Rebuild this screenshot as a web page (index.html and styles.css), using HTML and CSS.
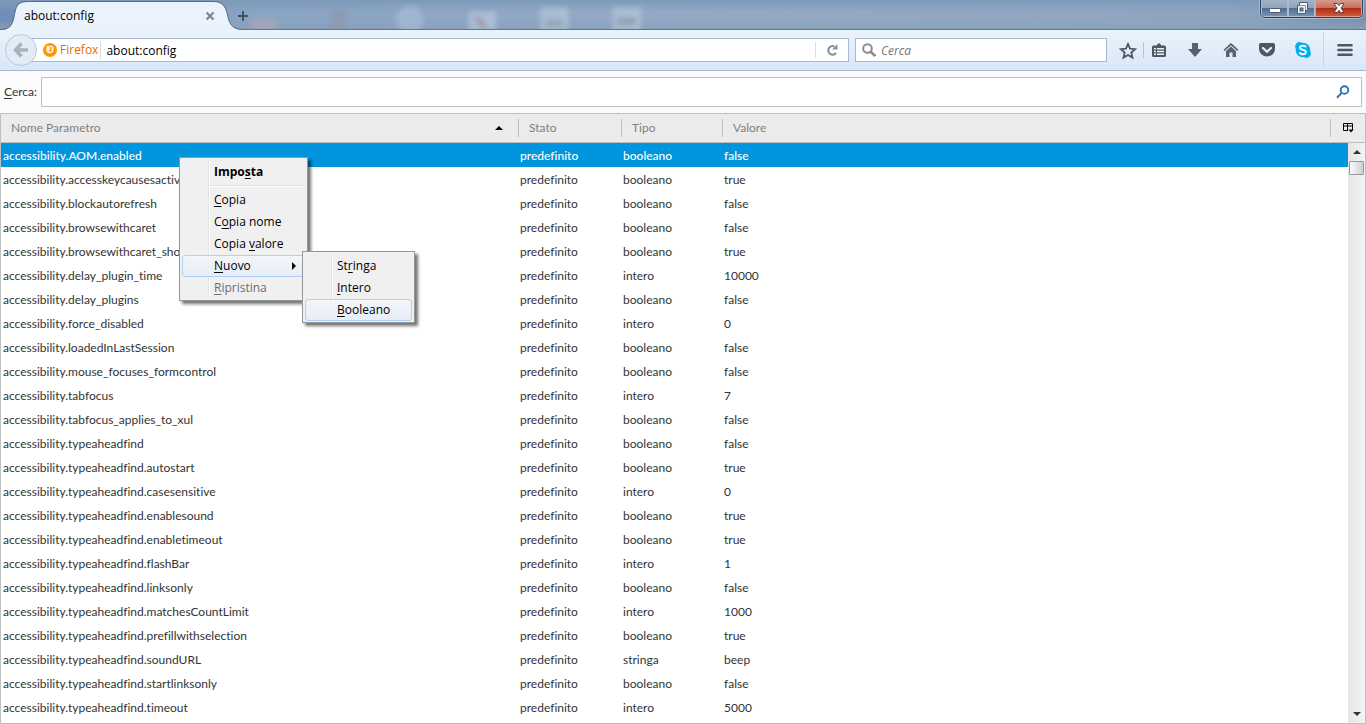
FILE: index.html
```html
<!DOCTYPE html>
<html lang="it">
<head>
<meta charset="utf-8">
<title>about:config</title>
<link rel="stylesheet" href="styles.css">
</head>
<body>
<header class="titlebar">
  <svg class="glass" width="700" height="30" viewBox="0 0 700 30" aria-hidden="true">
    <defs><filter id="soft" x="-50%" y="-50%" width="200%" height="200%"><feGaussianBlur stdDeviation="2.500"/></filter></defs>
    <g filter="url(#soft)" opacity=".75">
      <rect x="248" y="19" width="26" height="12" fill="#aaa8b6"/>
      <rect x="330" y="10" width="16" height="22" fill="#8b9aac"/>
      <circle cx="412" cy="20" r="14" fill="#a6bbd5"/>
      <rect x="473" y="12" width="28" height="20" fill="#b4c6da"/>
      <path d="M480 18l10 10" stroke="#b08fa2" stroke-width="6"/>
      <rect x="547" y="8" width="29" height="24" fill="#b2c6d9"/>
      <rect x="552" y="20" width="18" height="8" fill="#93a8b4"/>
      <rect x="622" y="8" width="29" height="24" fill="#b2c6d9"/>
      <rect x="626" y="18" width="20" height="8" fill="#8fa2b2"/>
    </g>
  </svg>
  <div class="tab">
    <svg class="tab-shape" width="245" height="31" viewBox="0 0 245 31" aria-hidden="true">
      <path d="M0 30C9 30 12 27 14 18C16 7 17 2 27 2H214C223 2 226 8 228 17C230 26 234 30 244 30V31H0Z" fill="#eaf2fc"/>
      <path d="M0 29.500C9 29 12 26 14 17C16 6 17 1.500 27 1.500H214C224 1.500 226 8 228 17C230 26 234 29.500 244 29.500" fill="none" stroke="#56708f"/>
    </svg>
    <span class="tab-title">about:config</span>
    <button class="tab-close" aria-label="Chiudi scheda"><svg width="10" height="10" viewBox="0 0 10 10"><path d="M1.500 1.500l7 7M8.500 1.500l-7 7" stroke="#7c8793" stroke-width="2.200"/></svg></button>
  </div>
  <button class="new-tab" aria-label="Nuova scheda"><svg width="12" height="12" viewBox="0 0 12 12"><path d="M6 1v10M1 6h10" stroke="#43505f" stroke-width="2"/></svg></button>
  <div class="window-buttons">
    <button class="win" aria-label="Riduci a icona"><svg width="14" height="16" viewBox="0 0 14 16"><rect x="1.500" y="8.500" width="11" height="4" rx="1" fill="#fff" stroke="#4b5a72"/></svg></button>
    <button class="win" aria-label="Ripristina finestra"><svg width="14" height="16" viewBox="0 0 14 16"><path d="M4.500 2.500h8v8h-2v3h-8v-8h2z" fill="#f5f7fa" stroke="#4b5a72"/><path d="M4.500 5.500h6v5" fill="none" stroke="#8090a6"/><rect x="5" y="8" width="3" height="3" fill="#6e82a0" stroke="#4b5a72"/></svg></button>
    <button class="win win-close" aria-label="Chiudi"><svg width="14" height="16" viewBox="0 0 14 16"><path d="M2 3.500h3.200L7 5.700l1.800-2.200H12L9 8l3 4.500H8.800L7 10.300l-1.800 2.200H2L5 8z" fill="#fff" stroke="#5d4049"/></svg></button>
  </div>
</header>

<nav class="toolbar">
  <button class="back" aria-label="Indietro"><svg width="16" height="16" viewBox="0 0 16 16"><path d="M8.500 1.500L2.500 8l6 6.500M3 8h12" fill="none" stroke="#a7b2bf" stroke-width="3.400"/></svg></button>
  <div class="urlbar">
    <svg width="14" height="14" viewBox="0 0 14 14" aria-hidden="true"><circle cx="7" cy="7" r="7" fill="#ff9500"/><path d="M4.500 2.200L6.500 3.200L9 2.400C11.300 4 11.200 7.500 9.600 9.200C7.800 11 4.800 10.600 3.600 8.400C3 7 3.200 5.500 3.600 4.600z" fill="#fff3dc"/><path d="M6.800 4.200h2.400L8 6.500l1 1.200q-2 1.600-3.600.3L7 7z" fill="#ff9500"/><path d="M1 4L2.500 1.500L3.800 3.500z" fill="#ffb64f"/></svg>
    <span class="identity">Firefox</span>
    <input class="url-input" type="text" aria-label="Indirizzo" value="about:config">
    <button class="reload" aria-label="Ricarica"><svg width="12" height="12" viewBox="0 0 12 12"><path d="M8.500 2.500A4.300 4.300 0 1 0 10 9" fill="none" stroke="#8793a3" stroke-width="2.200"/><path d="M11.500 0v5.500H6z" fill="#8793a3"/></svg></button>
  </div>
  <div class="searchbar">
    <svg width="14" height="14" viewBox="0 0 14 14" aria-hidden="true"><circle cx="5.500" cy="5.500" r="4.300" fill="none" stroke="#8b8b8b" stroke-width="2"/><path d="M8.700 8.700l4.500 4.300" stroke="#8b8b8b" stroke-width="2.600"/></svg>
    <input class="search-input" type="text" aria-label="Ricerca web" placeholder="Cerca">
  </div>
  <div class="actions">
    <button class="tool star" aria-label="Segnalibro"><svg width="18" height="18" viewBox="0 0 18 18"><path d="M9 2l2.100 4.700 5.100.5-3.900 3.400 1.200 5L9 13l-4.500 2.600 1.200-5L1.800 7.200l5.100-.5z" fill="none" stroke="#4c5965" stroke-width="1.800"/></svg></button>
    <button class="tool list" aria-label="Segnalibri"><svg width="16" height="16" viewBox="0 0 16 16"><path d="M2.500 3.500h2.800L8 1l2.700 2.500h2.800q1.500 0 1.500 1.500v8.500q0 1.500-1.500 1.500h-11Q1 15 1 13.500V5q0-1.500 1.500-1.500z" fill="#4c5965"/><path d="M3 6h2v1.500H3zM6 6h7v1.500H6zM3 8.800h2v1.500H3zM6 8.800h7v1.500H6zM3 11.600h2v1.500H3zM6 11.600h7v1.500H6z" fill="#e9f2fb"/></svg></button>
    <button class="tool" aria-label="Download"><svg width="16" height="16" viewBox="0 0 16 16"><path d="M5 1h6v6h4l-7 8-7-8h4z" fill="#56626e"/></svg></button>
    <button class="tool" aria-label="Pagina iniziale"><svg width="16" height="16" viewBox="0 0 16 16"><path d="M8 1l7.500 7-1 1L8 3.200 1.500 9l-1-1z" fill="#4c5965"/><path d="M8 4.500l5 4.500v6H9.500v-4.500h-3V15H3V9z" fill="#56626e"/></svg></button>
    <button class="tool" aria-label="Pocket"><svg width="16" height="16" viewBox="0 0 16 16"><path d="M1.500 1h13Q16 1 16 2.500V7A8 7.500 0 0 1 0 7V2.500Q0 1 1.500 1z" fill="#4c5965"/><path d="M4 6l4 3.700L12 6" fill="none" stroke="#edf4fb" stroke-width="2.100" stroke-linecap="round"/></svg></button>
    <button class="tool" aria-label="Skype"><svg width="16" height="16" viewBox="0 0 16 16"><circle cx="8" cy="8" r="7.300" fill="#00aff0"/><circle cx="4.500" cy="4.500" r="4.400" fill="#00aff0"/><circle cx="11.500" cy="11.500" r="4.400" fill="#00aff0"/><path d="M11 5.200C10.500 3.800 9.300 3.700 8 3.700c-1.800 0-3 .8-3 2.100 0 2.700 5.900 1.500 5.900 4.200 0 1.500-1.300 2.200-3 2.200-1.600 0-2.900-.6-3.200-2" fill="none" stroke="#fff" stroke-width="1.900"/></svg></button>
    <button class="tool menu-button" aria-label="Apri menu"><svg width="16" height="14" viewBox="0 0 16 14"><path d="M1.500 2.200h13M1.500 7h13M1.500 11.800h13" stroke="#4c5965" stroke-width="2.600" stroke-linecap="round"/></svg></button>
  </div>
</nav>

<main class="config">
  <div class="filter">
    <label for="filter"><u>C</u>erca:</label>
    <div class="filter-box">
      <input id="filter" type="text">
      <svg width="14" height="14" viewBox="0 0 14 14" aria-hidden="true"><circle cx="8.500" cy="5" r="3.800" fill="none" stroke="#2e73b0" stroke-width="1.900"/><path d="M5.700 7.900L1 12.700" stroke="#2e73b0" stroke-width="2"/></svg>
    </div>
  </div>
  <div class="tree">
    <table class="prefs">
      <colgroup><col class="col-name"><col class="col-state"><col class="col-type"><col><col class="col-picker"></colgroup>
      <thead><tr>
        <th><span class="head sorted">Nome Parametro <svg width="8" height="4" viewBox="0 0 8 4"><path d="M4 0l4 4H0z"/></svg></span></th>
        <th><span class="head divided">Stato</span></th>
        <th><span class="head divided">Tipo</span></th>
        <th><span class="head divided">Valore</span></th>
        <th><button class="head divided picker" aria-label="Scegli colonne"><svg width="11" height="10" viewBox="0 0 11 10"><path d="M.5.500h9v7M.5.500v7H5M.5 3h9M4.500.500v7" fill="none" stroke="#000"/><path d="M5.500 6.500h5L8 9.500z"/></svg></button></th>
      </tr></thead>
      <tbody>
        <tr class="selected"><td>accessibility.AOM.enabled</td><td>predefinito</td><td>booleano</td><td colspan="2">false</td></tr>
        <tr><td>accessibility.accesskeycausesactiv</td><td>predefinito</td><td>booleano</td><td colspan="2">true</td></tr>
        <tr><td>accessibility.blockautorefresh</td><td>predefinito</td><td>booleano</td><td colspan="2">false</td></tr>
        <tr><td>accessibility.browsewithcaret</td><td>predefinito</td><td>booleano</td><td colspan="2">false</td></tr>
        <tr><td>accessibility.browsewithcaret_sho</td><td>predefinito</td><td>booleano</td><td colspan="2">true</td></tr>
        <tr><td>accessibility.delay_plugin_time</td><td>predefinito</td><td>intero</td><td colspan="2">10000</td></tr>
        <tr><td>accessibility.delay_plugins</td><td>predefinito</td><td>booleano</td><td colspan="2">false</td></tr>
        <tr><td>accessibility.force_disabled</td><td>predefinito</td><td>intero</td><td colspan="2">0</td></tr>
        <tr><td>accessibility.loadedInLastSession</td><td>predefinito</td><td>booleano</td><td colspan="2">false</td></tr>
        <tr><td>accessibility.mouse_focuses_formcontrol</td><td>predefinito</td><td>booleano</td><td colspan="2">false</td></tr>
        <tr><td>accessibility.tabfocus</td><td>predefinito</td><td>intero</td><td colspan="2">7</td></tr>
        <tr><td>accessibility.tabfocus_applies_to_xul</td><td>predefinito</td><td>booleano</td><td colspan="2">false</td></tr>
        <tr><td>accessibility.typeaheadfind</td><td>predefinito</td><td>booleano</td><td colspan="2">false</td></tr>
        <tr><td>accessibility.typeaheadfind.autostart</td><td>predefinito</td><td>booleano</td><td colspan="2">true</td></tr>
        <tr><td>accessibility.typeaheadfind.casesensitive</td><td>predefinito</td><td>intero</td><td colspan="2">0</td></tr>
        <tr><td>accessibility.typeaheadfind.enablesound</td><td>predefinito</td><td>booleano</td><td colspan="2">true</td></tr>
        <tr><td>accessibility.typeaheadfind.enabletimeout</td><td>predefinito</td><td>booleano</td><td colspan="2">true</td></tr>
        <tr><td>accessibility.typeaheadfind.flashBar</td><td>predefinito</td><td>intero</td><td colspan="2">1</td></tr>
        <tr><td>accessibility.typeaheadfind.linksonly</td><td>predefinito</td><td>booleano</td><td colspan="2">false</td></tr>
        <tr><td>accessibility.typeaheadfind.matchesCountLimit</td><td>predefinito</td><td>intero</td><td colspan="2">1000</td></tr>
        <tr><td>accessibility.typeaheadfind.prefillwithselection</td><td>predefinito</td><td>booleano</td><td colspan="2">true</td></tr>
        <tr><td>accessibility.typeaheadfind.soundURL</td><td>predefinito</td><td>stringa</td><td colspan="2">beep</td></tr>
        <tr><td>accessibility.typeaheadfind.startlinksonly</td><td>predefinito</td><td>booleano</td><td colspan="2">false</td></tr>
        <tr><td>accessibility.typeaheadfind.timeout</td><td>predefinito</td><td>intero</td><td colspan="2">5000</td></tr>
      </tbody>
    </table>
    <div class="scrollbar" aria-hidden="true">
      <svg class="arrow" width="8" height="4" viewBox="0 0 8 4"><path d="M4 0l4 4H0z" fill="#333"/></svg>
      <span class="thumb"></span>
      <svg class="arrow arrow-down" width="8" height="4" viewBox="0 0 8 4"><path d="M4 4l4-4H0z" fill="#333"/></svg>
    </div>
  </div>
</main>

<div class="menu context" role="menu">
  <button class="item default" role="menuitem"><span>Impo<u>s</u>ta</span></button>
  <hr class="rule">
  <button class="item" role="menuitem"><span><u>C</u>opia</span></button>
  <button class="item" role="menuitem"><span>C<u>o</u>pia nome</span></button>
  <button class="item" role="menuitem"><span>Copia <u>v</u>alore</span></button>
  <button class="item active" role="menuitem"><span><u>N</u>uovo</span><svg width="4" height="8" viewBox="0 0 4 8"><path d="M0 0l4 4-4 4z"/></svg></button>
  <button class="item" role="menuitem" disabled><span><u>R</u>ipristina</span></button>
</div>
<div class="menu submenu" role="menu">
  <button class="item" role="menuitem"><span>St<u>r</u>inga</span></button>
  <button class="item" role="menuitem"><span><u>I</u>ntero</span></button>
  <button class="item active" role="menuitem"><span><u>B</u>ooleano</span></button>
</div>
</body>
</html>
```

FILE: styles.css
```css
* { box-sizing: border-box; }

body {
  margin: 0;
  height: 100vh;
  display: flex;
  flex-direction: column;
  overflow: hidden;
  position: relative;
  font: 12px/16px "Open Sans", "Noto Sans", sans-serif;
  color: #333;
  background: #fbfbfb;
}

button, input { font: inherit; color: inherit; }
button { border: 0; padding: 0; background: none; }
input { border: 0; padding: 0; outline: 0; background: none; min-width: 0; }
svg { display: block; flex: none; }
u { text-underline-offset: 2px; }

/* Title bar */
.titlebar {
  flex: none;
  height: 30px;
  display: flex;
  position: relative;
  background:
    linear-gradient(#7d9ab9 0, transparent 12px, transparent 20px, #87a0b9 30px),
    linear-gradient(90deg, #708db7, #8aa4c4 260px, #94a9c4 50%, #8fa5bf 90%, #7792b1);
  border-bottom: 1px solid #5e7894;
}
.glass { position: absolute; left: 0; top: 0; height: 29px; }
.tab {
  width: 245px;
  height: 31px;
  position: relative;
  z-index: 1;
  display: flex;
  align-items: center;
  justify-content: space-between;
  padding: 0 30px 0 24px;
  color: #000;
}
.tab-shape { position: absolute; left: 0; top: 0; }
.tab-title, .tab-close { position: relative; }
.new-tab { position: relative; width: 24px; height: 31px; margin-left: -14px; padding-left: 6px; z-index: 1; }
.window-buttons {
  margin: 0 3px 0 auto;
  height: 18px;
  display: flex;
  border: 1px solid #2e405c;
  border-top: 0;
  border-radius: 0 0 5px 5px;
  overflow: hidden;
  box-shadow: 0 0 0 1px #a9bacd;
}
.win {
  width: 27px;
  display: flex;
  justify-content: center;
  border: 1px solid #aebccd;
  border-top: 0;
  background: linear-gradient(#a3b3c7 0, #8ea3bd 8px, #4f6c92 8px, #7a98b8 17px);
}
.win-close {
  width: 47px;
  border-color: #df9b8d;
  background: linear-gradient(#d49a8e 0, #c96f5e 8px, #b02a14 8px, #cf5f3a 17px);
}

/* Navigation toolbar */
.toolbar {
  flex: none;
  height: 41px;
  display: flex;
  align-items: center;
  padding-left: 5px;
  background: linear-gradient(#eaf3fc, #d9e7f8);
  border-bottom: 1px solid #a5b9d3;
}
.back {
  width: 32px;
  height: 32px;
  flex: none;
  display: grid;
  place-items: center;
  border: 1px solid #b9c8da;
  border-radius: 50%;
  background: #e2ecf7;
  z-index: 1;
}
.urlbar, .searchbar {
  height: 24px;
  display: flex;
  align-items: center;
  background: #fff;
  border: 1px solid #a9b9cf;
}
.urlbar { flex: 1; margin-left: -6px; padding-left: 11px; }
.identity { color: #e66b00; padding: 0 2px 0 3px; border-right: 1px solid #ddd; }
.identity, .url-input, .search-input { line-height: 18px; }
.url-input { flex: 1; color: #000; padding: 2px 0 0 5px; }
.search-input { flex: 1; padding-top: 2px; }
.search-input::placeholder { color: #777; font-style: italic; opacity: 1; }
.reload { width: 33px; height: 16px; display: grid; place-items: center; border-left: 1px solid #ddd; }
.searchbar { flex: 0 1 252px; margin-left: 6px; padding-left: 6px; gap: 5px; }
.actions { flex: none; display: flex; align-items: center; align-self: stretch; padding-left: 6px; }
.tool { width: 36px; height: 16px; display: grid; place-items: center; }
.star { width: 30px; }
.list { width: 34px; padding-right: 3px; border-left: 1px solid #b4c4d8; }
.menu-button { width: 43px; height: 36px; margin-left: 2px; border-left: 1px solid #c7d5e6; }

/* Filter row */
.config {
  flex: 1;
  min-height: 0;
  display: flex;
  flex-direction: column;
  font-family: Lato, "Open Sans", sans-serif;
  font-variant-ligatures: none;
}
.filter { flex: none; display: flex; align-items: center; gap: 4px; padding: 6px 4px; }
.filter-box {
  flex: 1;
  height: 30px;
  display: flex;
  align-items: center;
  padding: 0 11px 0 4px;
  background: #fff;
  border: 1px solid #bfbfbf;
  border-radius: 1px;
}
.filter-box input { flex: 1; }

/* Preference table */
.tree {
  flex: 1;
  min-height: 0;
  position: relative;
  overflow: hidden;
  background: #fff;
  border: 1px solid #bfbfbf;
}
.prefs { width: 100%; table-layout: fixed; border-collapse: separate; border-spacing: 0; }
.col-name { width: 517px; }
.col-state { width: 103px; }
.col-type { width: 101px; }
.col-picker { width: 35px; }
.prefs th {
  height: 29px;
  padding: 0;
  font-weight: 400;
  text-align: left;
  color: #808080;
  background: #ebebeb;
  border-bottom: 1px solid #bfbfbf;
}
.head { display: flex; align-items: center; height: 18px; padding-left: 10px; }
.sorted { justify-content: space-between; padding-right: 15px; }
.sorted svg { fill: #000; }
.divided { border-left: 1px solid #bfbfbf; }
.picker { width: 100%; padding-left: 12px; }
.prefs td { height: 24px; padding: 2px 2px 0; white-space: nowrap; }
.selected { background: #0095dd; color: #fff; font-weight: 500; }

.scrollbar {
  position: absolute;
  top: 29px;
  right: 0;
  bottom: 0;
  width: 17px;
  display: flex;
  flex-direction: column;
  align-items: center;
  background: linear-gradient(90deg, #e6e6e6, #f3f3f3);
}
.arrow { margin: 7px 0; }
.thumb { width: 15px; height: 14px; border: 1px solid #979797; border-radius: 1px; background: linear-gradient(90deg, #fafafa, #cfcfcf); }
.arrow-down { margin-top: auto; }

/* Context menus */
.menu {
  position: absolute;
  padding: 3px 2px 1px;
  color: #000;
  border: 1px solid #979797;
  background: linear-gradient(90deg, #e2e3e3 1px, #fff 1px) 28px 2px / 2px calc(100% - 4px) no-repeat #f0f0f0;
  box-shadow: 3px 3px 3px rgba(0, 0, 0, .55);
}
.context { left: 179px; top: 157px; width: 129px; }
.submenu { left: 302px; top: 251px; width: 113px; }
.item {
  width: 100%;
  height: 22px;
  display: flex;
  align-items: center;
  justify-content: space-between;
  padding: 0 8px 0 31px;
  border: 1px solid transparent;
  border-radius: 3px;
}
.default { font-weight: 700; }
.active { border-color: #aecff7; background: linear-gradient(rgba(245, 248, 253, .6), rgba(228, 237, 250, .8)); }
.item:disabled { color: #6d6d6d; }
.rule { height: 2px; margin: 2px 0 2px 28px; border: 0; border-top: 1px solid #e0e0e0; background: #fff; }
```
